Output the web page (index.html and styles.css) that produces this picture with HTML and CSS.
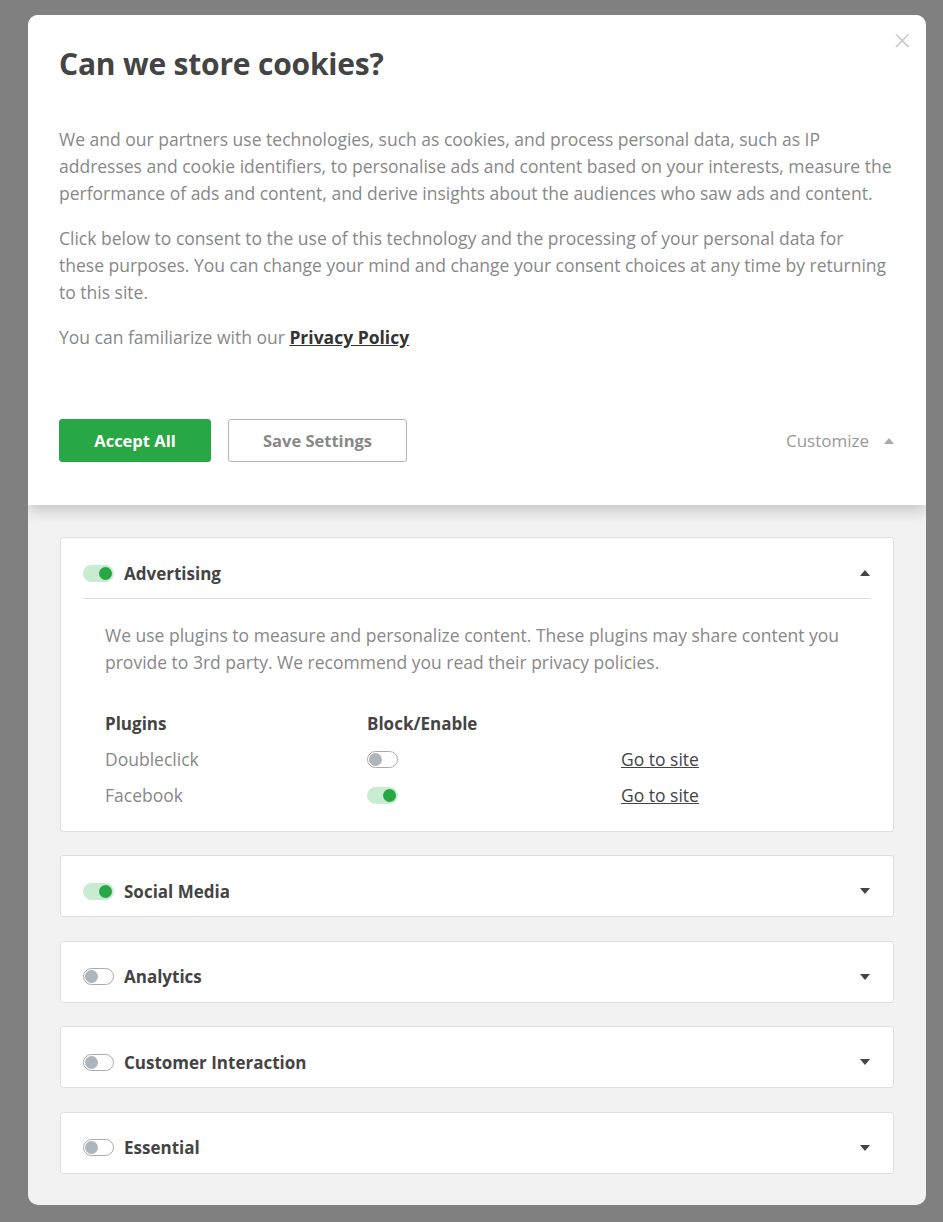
FILE: index.html
```html
<!DOCTYPE html>
<html>
<head>
<meta charset="utf-8">
<link rel="stylesheet" href="styles.css">
</head>
<body>
<div class="modal">
  <div class="top">
    <button class="close" aria-label="Close">&times;</button>
    <h1 class="title">Can we store cookies?</h1>
    <p class="text">We and our partners use technologies, such as cookies, and process personal data, such as IP addresses and cookie identifiers, to personalise ads and content based on your interests, measure the performance of ads and content, and derive insights about the audiences who saw ads and content.</p>
    <p class="text narrow">Click below to consent to the use of this technology and the processing of your personal data for these purposes. You can change your mind and change your consent choices at any time by returning to this site.</p>
    <p class="text">You can familiarize with our <a class="policy" href="#">Privacy Policy</a></p>
    <div class="actions">
      <button class="btn btn-accept">Accept All</button>
      <button class="btn btn-save">Save Settings</button>
      <span class="customize">Customize <span class="tri up gray"></span></span>
    </div>
  </div>
  <div class="bottom">
    <div class="card">
      <div class="card-head open">
        <span class="toggle on"></span>
        <span class="card-title">Advertising</span>
        <span class="tri up"></span>
      </div>
      <div class="card-body">
        <p class="desc">We use plugins to measure and personalize content. These plugins may share content you provide to 3rd party. We recommend you read their privacy policies.</p>
        <div class="plugins">
          <div class="th">Plugins</div><div class="th">Block/Enable</div><div></div>
          <div class="td">Doubleclick</div><div class="td"><span class="toggle"></span></div><div class="td"><a class="site" href="#">Go to site</a></div>
          <div class="td">Facebook</div><div class="td"><span class="toggle on"></span></div><div class="td"><a class="site" href="#">Go to site</a></div>
        </div>
      </div>
    </div>
    <div class="card">
      <div class="card-head">
        <span class="toggle on"></span>
        <span class="card-title">Social Media</span>
        <span class="tri down"></span>
      </div>
    </div>
    <div class="card">
      <div class="card-head">
        <span class="toggle"></span>
        <span class="card-title">Analytics</span>
        <span class="tri down"></span>
      </div>
    </div>
    <div class="card">
      <div class="card-head">
        <span class="toggle"></span>
        <span class="card-title">Customer Interaction</span>
        <span class="tri down"></span>
      </div>
    </div>
    <div class="card">
      <div class="card-head">
        <span class="toggle"></span>
        <span class="card-title">Essential</span>
        <span class="tri down"></span>
      </div>
    </div>
  </div>
</div>
</body>
</html>
```

FILE: styles.css
```css
* { box-sizing: border-box; }
html, body { margin: 0; padding: 0; }
body {
  background: #808080;
  font-family: "Open Sans", "Noto Sans", sans-serif;
  padding: 15px 17px 17px 28px;
}
.modal {
  width: 898px;
  height: 1190px;
  border-radius: 10px;
  overflow: hidden;
  background: #f2f2f2;
  display: flex;
  flex-direction: column;
}
.top {
  position: relative;
  background: #fff;
  padding: 27px 31px 43px 31px;
  box-shadow: 0 6px 14px rgba(0,0,0,0.18);
  z-index: 1;
}
.close {
  position: absolute;
  top: 12px;
  right: 13px;
  border: none;
  background: none;
  color: #c4c4c4;
  font-size: 26px;
  line-height: 26px;
  padding: 0;
  font-family: "DejaVu Sans", sans-serif;
  font-weight: 300;
}
.title {
  margin: 0 0 40px;
  font-size: 30px;
  line-height: 44px;
  font-weight: 700;
  color: #444;
  letter-spacing: -0.2px;
}
.text {
  margin: 0 0 18px;
  font-size: 17.5px;
  line-height: 27px;
  color: #888;
}
.text.narrow { max-width: 830px; }
.policy {
  color: #333;
  font-weight: 700;
  text-decoration: underline;
}
.actions {
  display: flex;
  align-items: center;
  margin-top: 68px;
}
.btn {
  font-family: inherit;
  font-size: 16.5px;
  height: 43px;
  border-radius: 3px;
  cursor: pointer;
}
.btn-accept {
  width: 152px;
  background: #28a745;
  border: 1px solid #28a745;
  color: #fff;
  font-weight: 700;
}
.btn-save {
  width: 179px;
  margin-left: 17px;
  background: #fff;
  border: 1px solid #b5b5b5;
  color: #888;
  font-weight: 700;
}
.customize {
  margin-left: auto;
  margin-right: 1px;
  color: #999;
  font-size: 17px;
  display: flex;
  align-items: center;
  gap: 15px;
}
.tri {
  display: inline-block;
  width: 0;
  height: 0;
  border-left: 5.5px solid transparent;
  border-right: 5.5px solid transparent;
}
.tri.up { border-bottom: 6px solid #444; }
.tri.down { border-top: 6px solid #444; }
.tri.up.gray { border-bottom-color: #aaa; }

.bottom {
  padding: 32px 32px 0 32px;
  display: flex;
  flex-direction: column;
  gap: 23.4px;
}
.card {
  background: #fff;
  border: 1px solid #dedede;
  border-radius: 3px;
  padding: 0 22px;
}
.card-head {
  display: flex;
  align-items: center;
  height: 60px;
  padding-top: 10px;
}
.card-head.open {
  height: 61px;
  border-bottom: 1px solid #dcdcdc;
}
.card-title {
  margin-left: 10px;
  font-weight: 700;
  font-size: 17px;
  color: #444;
}
.card-head .tri { margin-left: auto; margin-right: 1px; }
.toggle {
  display: inline-block;
  position: relative;
  width: 31px;
  height: 17px;
  border-radius: 9px;
  border: 1px solid #aaa;
  background: #fff;
  flex: none;
}
.toggle::after {
  content: "";
  position: absolute;
  top: 1px;
  left: 1px;
  width: 13px;
  height: 13px;
  border-radius: 50%;
  background: #adb5bd;
}
.toggle.on {
  background: #c9ebd1;
  border-color: #c9ebd1;
}
.toggle.on::after {
  left: auto;
  right: 1px;
  background: #28a745;
}
.card-body {
  padding: 23px 0 18px 22px;
}
.desc {
  margin: 0 0 29px;
  font-size: 17.5px;
  line-height: 27px;
  color: #888;
}
.plugins {
  display: grid;
  grid-template-columns: 262px 254px 1fr;
  grid-auto-rows: 36px;
  align-items: center;
}
.th {
  font-weight: 700;
  color: #444;
  font-size: 17px;
}
.td {
  color: #888;
  font-size: 17.5px;
  display: flex;
  align-items: center;
}
.site {
  color: #444;
  text-decoration: underline;
}
```
